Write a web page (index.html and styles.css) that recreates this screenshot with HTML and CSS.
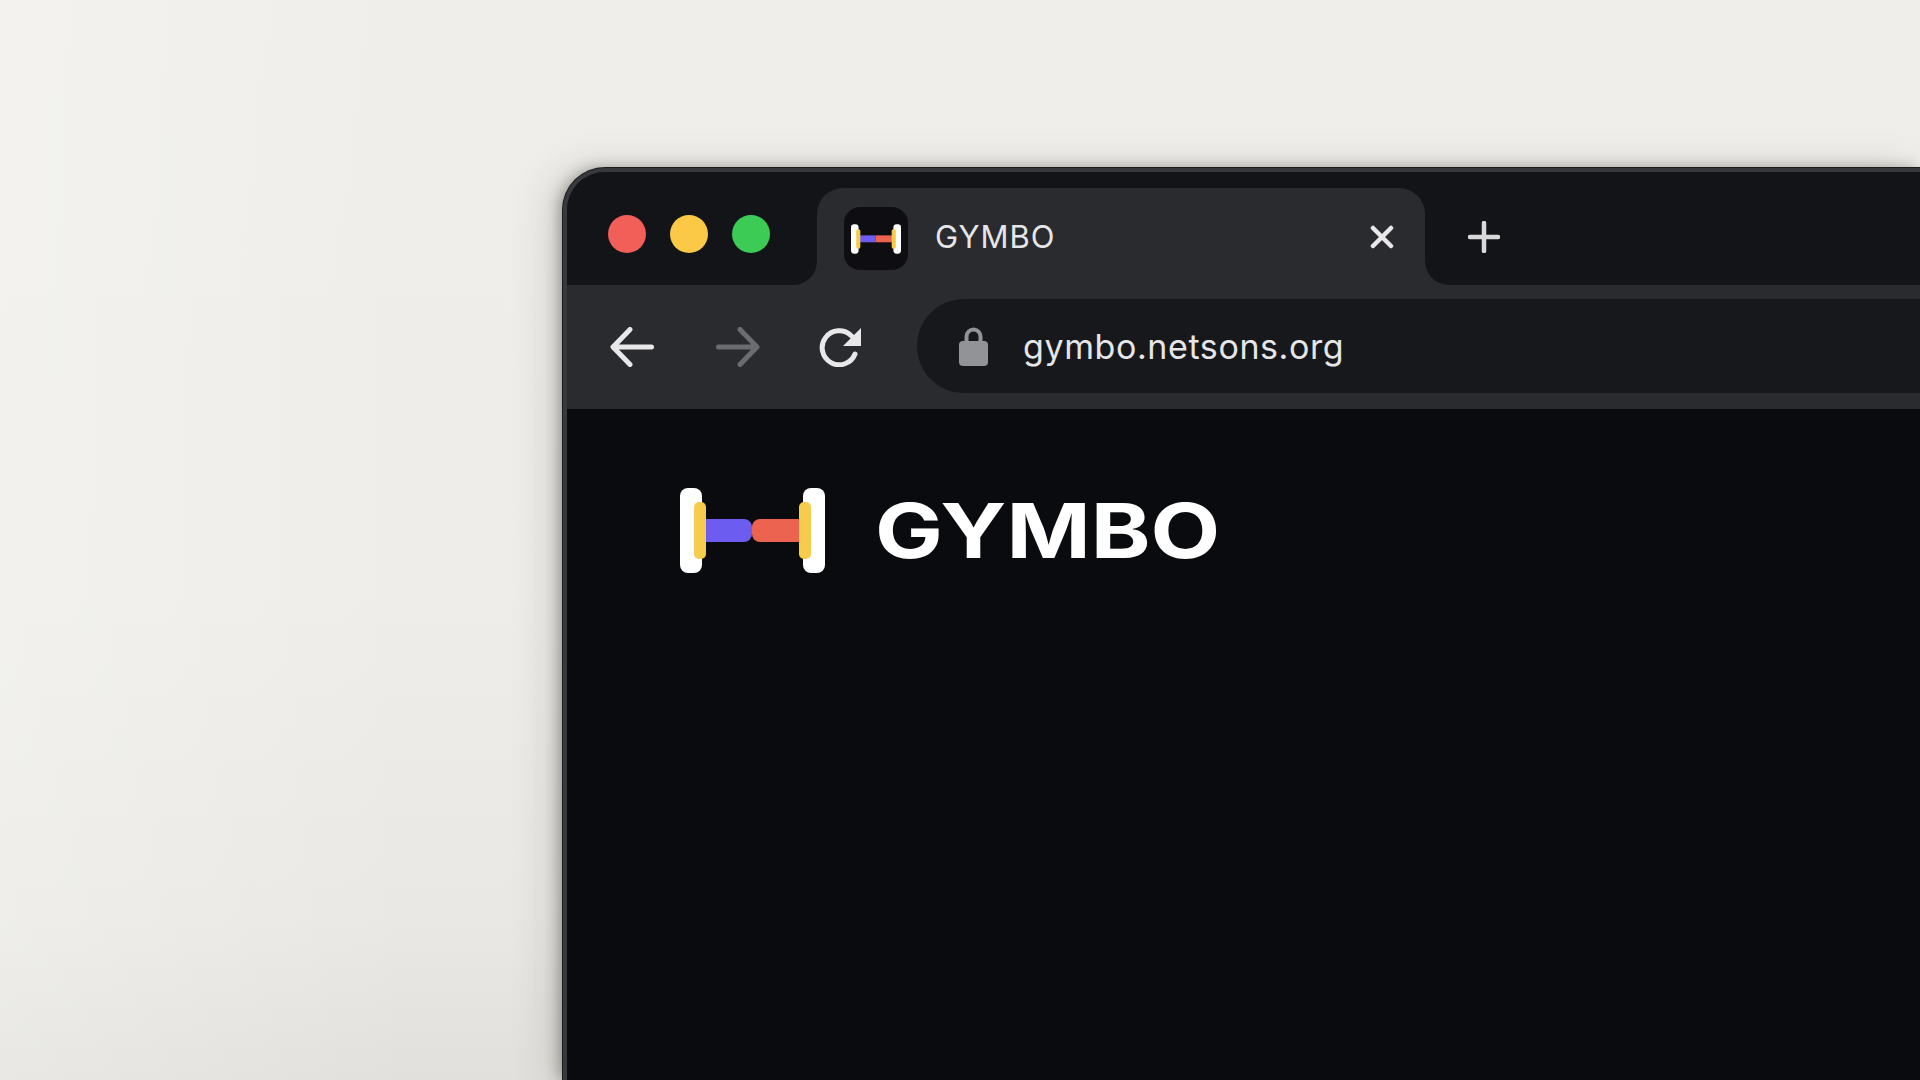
FILE: index.html
```html
<!DOCTYPE html>
<html lang="en">
<head>
<meta charset="utf-8">
<title>GYMBO</title>
<link rel="stylesheet" href="styles.css">
</head>
<body>
<main class="window">
  <header class="strip">
    <div class="controls">
      <span class="light light-red"></span>
      <span class="light light-yellow"></span>
      <span class="light light-green"></span>
    </div>
    <div class="tab-slot">
      <div class="tab">
        <span class="favicon">
          <svg class="favicon-mark" viewBox="0 0 145 85" aria-hidden="true">
            <rect x="26" y="32" width="46" height="20" fill="#6c5cf0"/>
            <rect x="72" y="32" width="47" height="20" fill="#ec6350"/>
            <rect x="0" y="0" width="22" height="85" rx="9" fill="#fff"/>
            <rect x="123" y="0" width="22" height="85" rx="9" fill="#fff"/>
            <rect x="15" y="14" width="12" height="57" rx="5" fill="#f7cb4c"/>
            <rect x="118" y="14" width="12" height="57" rx="5" fill="#f7cb4c"/>
          </svg>
        </span>
        <span class="tab-title">GYMBO</span>
        <svg class="tab-close" viewBox="0 0 24 24" aria-hidden="true"><path d="M3 3 21 21M21 3 3 21"/></svg>
      </div>
    </div>
    <div class="strip-rest">
      <svg class="new-tab" viewBox="0 0 32 32" aria-hidden="true"><path d="M16 2V30M2 16H30"/></svg>
    </div>
  </header>
  <nav class="toolbar">
    <svg class="nav-icon" viewBox="0 0 44 40" aria-hidden="true"><path d="M41.500 20H4M20 2.500 3 20 20 37.500"/></svg>
    <svg class="nav-icon nav-forward" viewBox="0 0 44 40" aria-hidden="true"><path d="M2.500 20H40M24 2.500 41 20 24 37.500"/></svg>
    <svg class="nav-icon nav-reload" viewBox="0 0 44 40" aria-hidden="true">
      <path d="M36 27A17 17 0 1 1 32 8.500L37 13"/>
      <path class="reload-head" d="M42 1 42 19 24 19Z"/>
    </svg>
    <div class="address">
      <svg class="lock" viewBox="0 0 29 39" aria-hidden="true">
        <path class="lock-bow" d="M7.500 16V9.500a7 7 0 0 1 14 0V16"/>
        <rect y="14" width="29" height="25" rx="4"/>
      </svg>
      <span class="url">gymbo.netsons.org</span>
    </div>
  </nav>
  <section class="page">
    <div class="brand">
      <svg class="brand-mark" viewBox="0 0 145 85" aria-hidden="true">
        <rect x="0" y="0" width="22" height="85" rx="8" fill="#fff"/>
        <rect x="123" y="0" width="22" height="85" rx="8" fill="#fff"/>
        <rect x="18" y="31" width="54" height="23" rx="8" fill="#6c5cf0"/>
        <rect x="72" y="31" width="54" height="23" rx="8" fill="#ec6350"/>
        <rect x="14" y="14" width="12" height="57" rx="5" fill="#f7cb4c"/>
        <rect x="119" y="14" width="12" height="57" rx="5" fill="#f7cb4c"/>
      </svg>
      <span class="brand-name">GYMBO</span>
    </div>
  </section>
</main>
</body>
</html>
```
FILE: styles.css
```css
* { box-sizing: border-box; }

html, body { height: 100%; margin: 0; }

body {
  display: flex;
  overflow: hidden;
  padding: 168px 0 0 563px;
  background:
    linear-gradient(90deg, rgba(255, 255, 255, .25) 0%, rgba(255, 255, 255, 0) 22%),
    linear-gradient(180deg, #efeeea 0%, #eeede9 55%, #e9e8e4 85%, #e1e0dc 100%);
  font-family: Inter, "Liberation Sans", sans-serif;
}

.window {
  display: flex;
  flex: 1;
  flex-direction: column;
  min-width: 0;
  border-top: 4px solid #38393c;
  border-left: 4px solid #38393c;
  border-top-left-radius: 42px;
  background: #0a0b0f;
  box-shadow:
    0 0 0 1px #1c1c1e,
    -4px 0 14px rgba(40, 40, 35, .38),
    -14px 0 40px rgba(40, 40, 35, .14);
}

.strip {
  display: flex;
  flex: none;
  height: 113px;
  border-top-left-radius: 38px;
  background: #2a2b2f;
  overflow: hidden;
}

.controls {
  display: flex;
  flex: none;
  gap: 24px;
  width: 250px;
  padding: 43px 0 0 41px;
  border-bottom-right-radius: 24px;
  background: #131417;
}

.light { width: 38px; height: 38px; border-radius: 50%; }
.light-red { background: #f25f58; }
.light-yellow { background: #fbc946; }
.light-green { background: #3ccb55; }

.tab-slot {
  flex: none;
  width: 608px;
  padding-top: 16px;
  background: #131417;
}

.tab {
  display: flex;
  align-items: flex-start;
  height: 100%;
  padding: 19px 0 0 27px;
  border-radius: 26px 26px 0 0;
  background: #2a2b2f;
}

.favicon {
  display: flex;
  flex: none;
  align-items: center;
  justify-content: center;
  width: 64px;
  height: 63px;
  border-radius: 16px;
  background: #0e0e12;
}

.favicon-mark { width: 50px; height: 30px; }

.tab-title {
  margin: 12px 0 0 27px;
  color: #e6e6e8;
  font-size: 31px;
  line-height: 36px;
  letter-spacing: 1px;
}

.tab-close {
  width: 24px;
  height: 24px;
  margin: 18px 31px 0 auto;
  fill: none;
  stroke: #e8e8ea;
  stroke-width: 4.500;
  stroke-linecap: round;
}

.strip-rest {
  flex: 1;
  padding: 49px 0 0 43px;
  border-bottom-left-radius: 24px;
  background: #131417;
}

.new-tab {
  display: block;
  width: 32px;
  height: 32px;
  fill: none;
  stroke: #d9d9dc;
  stroke-width: 4.500;
  stroke-linecap: round;
}

.toolbar {
  display: flex;
  flex: none;
  align-items: center;
  height: 124px;
  padding: 14px 0 16px 43px;
  background: #2a2b2f;
}

.nav-icon {
  flex: none;
  width: 44px;
  height: 40px;
  margin-top: 2px;
  fill: none;
  stroke: #e8e8ea;
  stroke-width: 5;
  stroke-linecap: round;
  stroke-linejoin: round;
}

.nav-forward { margin-left: 62px; stroke: #6b6c70; }
.nav-reload { margin-left: 59px; stroke-width: 5; }
.reload-head { fill: #e8e8ea; stroke: none; }

.address {
  display: flex;
  flex: 1;
  align-items: center;
  align-self: stretch;
  gap: 35px;
  margin-left: 54px;
  padding-left: 42px;
  border-radius: 47px 0 0 47px;
  background: #17181b;
}

.lock { flex: none; width: 29px; height: 39px; fill: #929396; }
.lock-bow { fill: none; stroke: #929396; stroke-width: 4; }

.url {
  position: relative;
  top: 1px;
  color: #e6e6e8;
  font-size: 34px;
  line-height: 40px;
  letter-spacing: .6px;
}

.page {
  flex: 1;
  padding: 79px 0 0 113px;
}

.brand { display: flex; align-items: center; gap: 50px; }

.brand-mark { display: block; flex: none; width: 145px; height: 85px; }

.brand-name {
  color: #fff;
  font-size: 76px;
  font-weight: 700;
  line-height: 85px;
  transform: scaleX(1.190);
  transform-origin: left center;
}
```
